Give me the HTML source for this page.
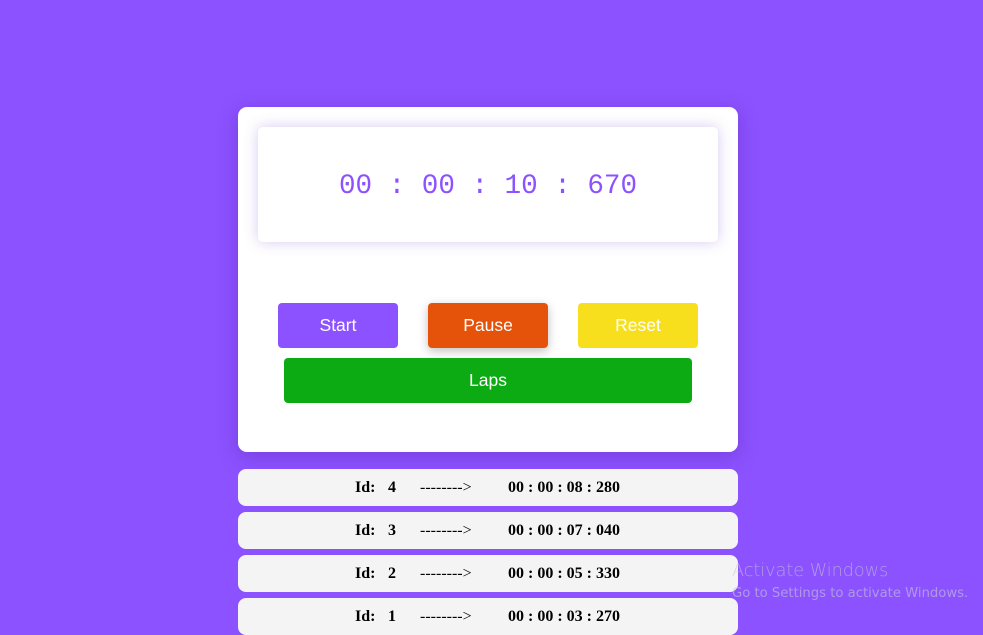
<!DOCTYPE html>
<html><head><style>
body{margin:0;width:983px;height:630px;background:#8c52ff;overflow:hidden;position:relative;font-family:"Liberation Sans",sans-serif}
.card{position:absolute;left:238px;top:107px;width:500px;height:345px;background:#fff;border-radius:9px;box-shadow:0 4px 20px rgba(80,30,160,.35)}
.disp{position:absolute;left:20px;top:20px;width:460px;height:115px;border-radius:5px;background:#fff;box-shadow:0 0 14px rgba(120,80,200,.3);display:flex;align-items:center;justify-content:center;font-family:"Liberation Mono","DejaVu Sans Mono",monospace;font-size:27.6px;color:#8c52ff;white-space:pre;padding-top:3px;box-sizing:border-box}
.b{position:absolute;height:45px;border-radius:4px;color:#fff;font-size:17.5px;display:flex;align-items:center;justify-content:center}
.row{position:absolute;left:238px;width:500px;height:37px;background:#f4f4f4;border-radius:8px;font-family:"Liberation Serif",serif;font-weight:bold;font-size:16px;color:#000}
.row span{position:absolute;top:10px}
.aw{position:absolute;left:732px;top:561px;color:rgba(200,200,210,.6);font-size:17.6px;font-family:"DejaVu Sans",sans-serif;font-weight:300}
.aw2{position:absolute;left:732px;top:586px;color:rgba(200,200,210,.6);font-size:13.2px;font-family:"DejaVu Sans",sans-serif}
</style></head><body>
<div class="card">
<div class="disp">00 : 00 : 10 : 670</div>
<div class="b" style="left:40px;top:196px;width:120px;background:#8c52ff">Start</div>
<div class="b" style="left:190px;top:196px;width:120px;background:#e5530a;box-shadow:0 3px 10px rgba(0,0,0,.25)">Pause</div>
<div class="b" style="left:340px;top:196px;width:120px;background:#f7df1e">Reset</div>
<div class="b" style="left:46px;top:251px;width:408px;background:#0dab13">Laps</div>
</div>
<div class="row" style="top:469px"><span style="left:117px">Id:</span><span style="left:150px">4</span><span style="left:182px;font-weight:normal">--------&gt;</span><span style="left:270px">00 : 00 : 08 : 280</span></div>
<div class="row" style="top:512px"><span style="left:117px">Id:</span><span style="left:150px">3</span><span style="left:182px;font-weight:normal">--------&gt;</span><span style="left:270px">00 : 00 : 07 : 040</span></div>
<div class="row" style="top:555px"><span style="left:117px">Id:</span><span style="left:150px">2</span><span style="left:182px;font-weight:normal">--------&gt;</span><span style="left:270px">00 : 00 : 05 : 330</span></div>
<div class="row" style="top:598px"><span style="left:117px">Id:</span><span style="left:150px">1</span><span style="left:182px;font-weight:normal">--------&gt;</span><span style="left:270px">00 : 00 : 03 : 270</span></div>
<div class="aw">Activate Windows</div>
<div class="aw2">Go to Settings to activate Windows.</div>
</body></html>
